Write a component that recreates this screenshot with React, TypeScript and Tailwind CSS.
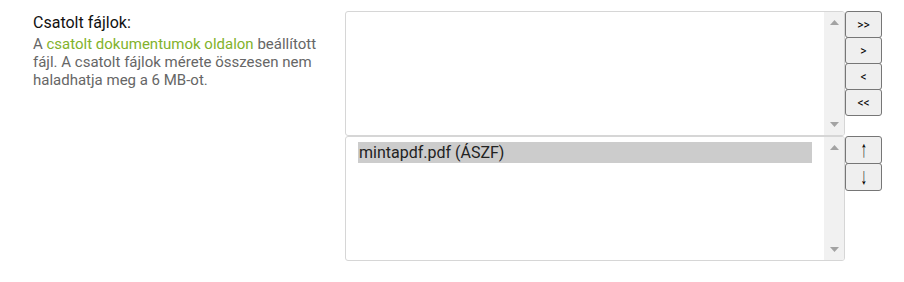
import React from 'react';

function Scrollbar() {
  return (
    <div className="w-[20px] bg-[#f1f1f1] flex flex-col items-center justify-between py-[8px]">
      <svg width="9" height="5" viewBox="0 0 9 5">
        <polygon points="0,5 9,5 4.5,0" fill="#a3a3a3" />
      </svg>
      <svg width="9" height="5" viewBox="0 0 9 5">
        <polygon points="0,0 9,0 4.5,5" fill="#a3a3a3" />
      </svg>
    </div>
  );
}

function ListBox({ items = [] as string[] }) {
  return (
    <div className="w-[500px] h-[125px] border border-[#d6d6d6] rounded-[3px] flex overflow-hidden bg-white">
      <div className="flex-1 pl-[12px] pr-[12px] pt-[5px]">
        {items.map((item) => (
          <div key={item} className="bg-[#cccccc] text-[#222] text-[16px] leading-[21px] pl-[1px]">
            {item}
          </div>
        ))}
      </div>
      <Scrollbar />
    </div>
  );
}

function SideButton({ label, big }: { label: string; big?: boolean }) {
  return (
    <button
      className={
        big
          ? 'w-[37px] h-[28px] -mt-px first:mt-0 border border-[#767676] rounded-[3px] bg-[#efefef] text-black leading-none flex items-center justify-center overflow-hidden'
          : 'w-[37px] h-[27px] -mt-px first:mt-0 border border-[#767676] rounded-[3px] bg-[#efefef] text-black text-[12px] leading-none flex items-center justify-center'
      }
    >
      {big ? (
        <span className="inline-block text-[16px] leading-[16px] scale-x-[0.8] scale-y-[1.45]">{label}</span>
      ) : (
        label
      )}
    </button>
  );
}

export default function App() {
  return (
    <div className="w-[904px] h-[282px] bg-white font-['Roboto',sans-serif] flex pt-[11px] pl-[33px]">
      {/* Label column */}
      <div className="w-[312px] pr-[20px]">
        <div className="text-[16px] leading-[22px] text-[#111] mt-[1px]">Csatolt fájlok:</div>
        <p className="text-[15px] leading-[18px] text-[#666] mt-[1px]">
          A <span className="text-[#82b22c]">csatolt dokumentumok oldalon</span> beállított fájl. A csatolt
          fájlok mérete összesen nem haladhatja meg a 6 MB-ot.
        </p>
      </div>

      {/* Select boxes */}
      <div className="flex flex-col">
        <div className="flex items-start">
          <ListBox />
          <div className="flex flex-col">
            <SideButton label=">>" />
            <SideButton label=">" />
            <SideButton label="<" />
            <SideButton label="<<" />
          </div>
        </div>
        <div className="flex items-start">
          <ListBox items={['mintapdf.pdf (ÁSZF)']} />
          <div className="flex flex-col">
            <SideButton label="↑" big />
            <SideButton label="↓" big />
          </div>
        </div>
      </div>
    </div>
  );
}
